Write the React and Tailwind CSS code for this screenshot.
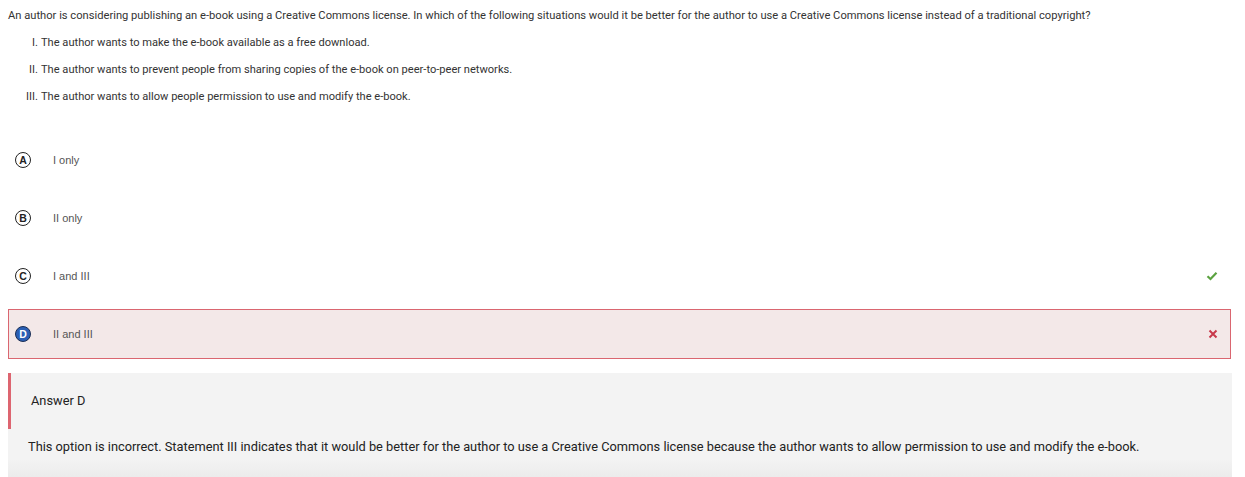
import React from "react";

const roboto = { fontFamily: "Roboto, 'Liberation Sans', sans-serif" };

function Circle({ letter, selected }) {
  if (selected) {
    return (
      <div className="w-[16px] h-[16px] rounded-full bg-[#2b5fb4] border border-[#1b2f55] flex items-center justify-center text-white text-[10.5px] font-bold leading-none font-['Liberation_Sans',sans-serif]">
        {letter}
      </div>
    );
  }
  return (
    <div className="w-[16px] h-[16px] rounded-full border border-[#222] flex items-center justify-center text-[#222] text-[10.5px] font-bold leading-none font-['Liberation_Sans',sans-serif]">
      {letter}
    </div>
  );
}

function Option({ letter, text, status }) {
  const wrong = status === "wrong";
  return (
    <div
      className={
        "h-[50px] flex items-center pl-[6px] pr-[12px] " +
        (wrong ? "bg-[#f3e8e8] border border-[#da6670] " : "border border-transparent ")
      }
    >
      <Circle letter={letter} selected={wrong} />
      <span className="ml-[22px] text-[11px] text-[#555] font-['Liberation_Sans',sans-serif]">{text}</span>
      <div className="ml-auto flex items-center">
        {status === "correct" && (
          <svg width="12" height="10" viewBox="0 0 12 10">
            <path d="M1.5 5.2 L4.5 8 L10.5 1.8" fill="none" stroke="#5ba240" strokeWidth="2.2" />
          </svg>
        )}
        {wrong && (
          <svg width="10" height="10" viewBox="0 0 10 10">
            <path d="M1.5 1.5 L8.5 8.5 M8.5 1.5 L1.5 8.5" fill="none" stroke="#c8394b" strokeWidth="2" />
          </svg>
        )}
      </div>
    </div>
  );
}

export default function App() {
  const statements = [
    ["I.", "The author wants to make the e-book available as a free download."],
    ["II.", "The author wants to prevent people from sharing copies of the e-book on peer-to-peer networks."],
    ["III.", "The author wants to allow people permission to use and modify the e-book."],
  ];
  return (
    <div className="w-[1245px] h-[477px] overflow-hidden bg-white relative" style={roboto}>
      <div className="pl-[8px] pr-[12px]">
        <p className="pt-[8px] text-[11.17px] leading-[15px] text-[#333]">
          An author is considering publishing an e-book using a Creative Commons license. In which of the following situations would it be better for the author to use a Creative Commons license instead of a traditional copyright?
        </p>
        <div className="mt-[12px] flex flex-col gap-[12px]">
          {statements.map(([n, t]) => (
            <div key={n} className="flex text-[11.1px] leading-[15px] text-[#333]">
              <span className="w-[30px] text-right shrink-0">{n}</span>
              <span className="ml-[3px]">{t}</span>
            </div>
          ))}
        </div>
        <div className="mt-[31px] flex flex-col gap-[8px] w-[1223px]">
          <Option letter="A" text="I only" />
          <Option letter="B" text="II only" />
          <Option letter="C" text="I and III" status="correct" />
          <Option letter="D" text="II and III" status="wrong" />
        </div>
        <div className="mt-[14px] w-[1224px] h-[120px] bg-[#f3f3f3] relative">
          <div className="h-[56px] border-l-[3px] border-[#dd6570] flex items-center pl-[20px] text-[12.8px] text-[#222]">
            Answer D
          </div>
          <p className="pl-[20px] mt-[9px] text-[12.8px] leading-[18px] text-[#222]">
            This option is incorrect. Statement III indicates that it would be better for the author to use a Creative Commons license because the author wants to allow permission to use and modify the e-book.
          </p>
          <div className="absolute left-0 right-0 top-[86px] h-[20px] bg-gradient-to-b from-transparent to-[#ebebeb]" />
        </div>
      </div>
    </div>
  );
}
